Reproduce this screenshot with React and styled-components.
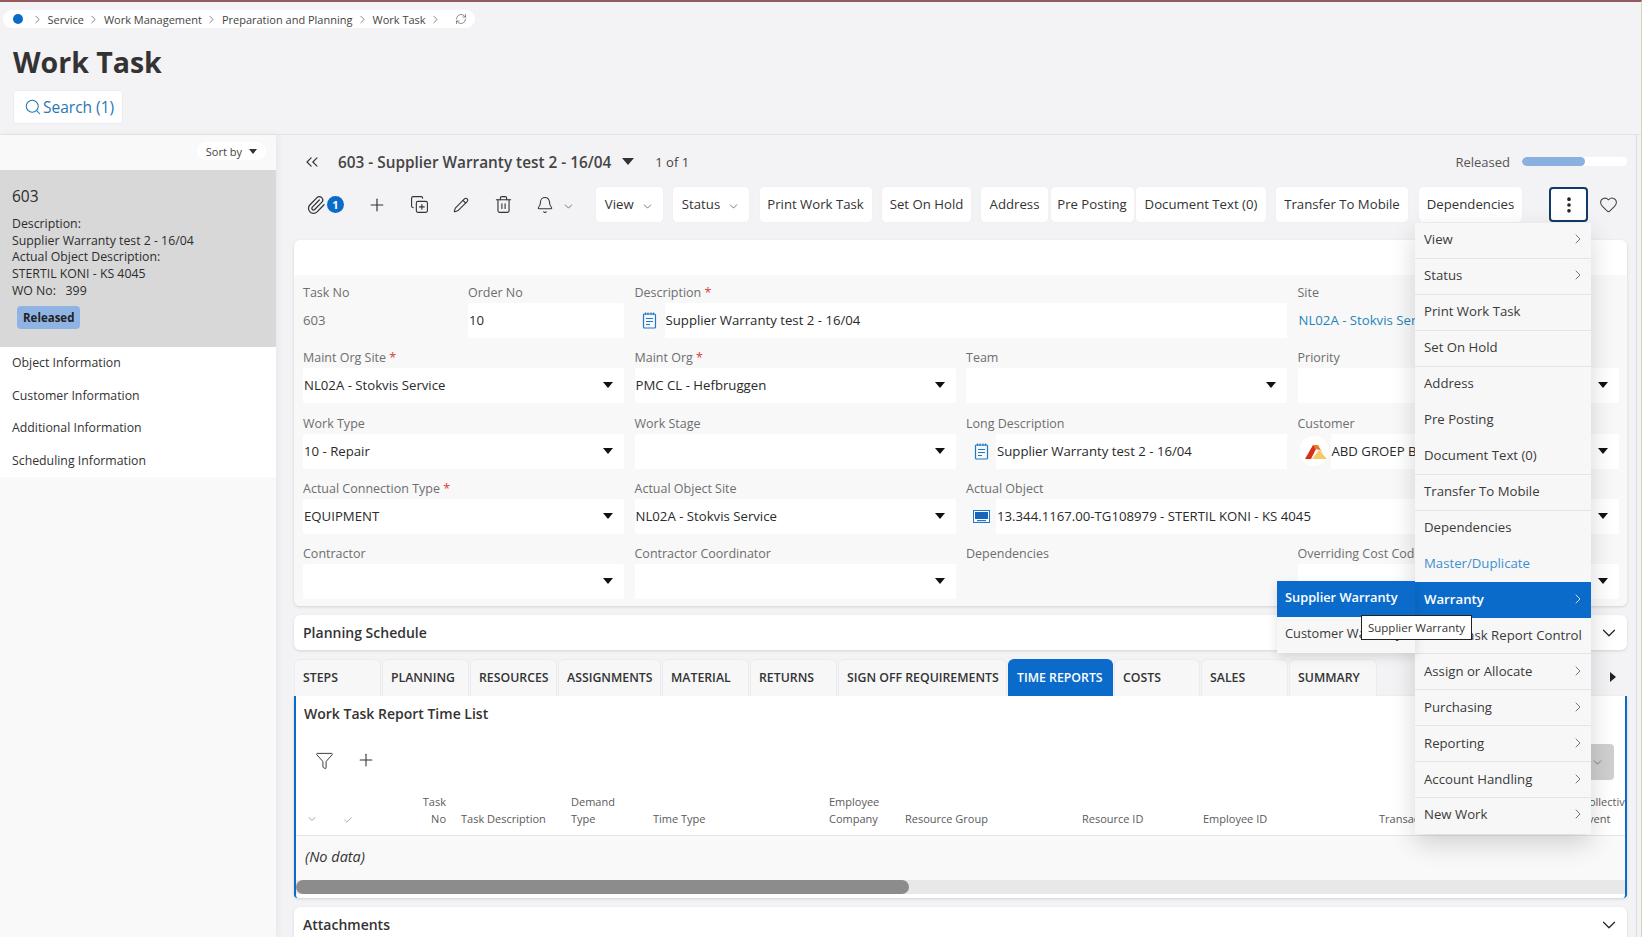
import React from 'react';
import styled, { createGlobalStyle } from 'styled-components';
import {
  Bell, Check, ChevronDown, ChevronRight, ChevronsLeft, CopyPlus, EllipsisVertical, Funnel, Heart,
  Paperclip, Pencil, Plus, RefreshCw, Search, Trash2,
} from 'lucide-react';

const GlobalStyle = createGlobalStyle`
  html, body { margin: 0; padding: 0; height: 100%; overflow: hidden; }
  body { font-family: "Open Sans", "Liberation Sans", sans-serif; color: #333; background: #f3f2f5; }
  * { box-sizing: border-box; }
`;

const Page = styled.div`
  position: relative;
  width: 1642px;
  height: 937px;
  overflow: hidden;
  background: #f3f2f5;
  border-top: 2px solid #955a5f;
  border-right: 1px solid #d9d2bd;
`;

const PageHeader = styled.header`
  height: 133px;
  padding: 8px 0 0 3px;
  border-bottom: 1px solid #e4e4e6;
`;

const Breadcrumb = styled.nav`
  display: flex;
  align-items: center;
  width: 472px;
  height: 18px;
  padding-left: 10px;
  background: #fff;
  border-radius: 9px;
  font-size: 11px;
  color: #444;

  svg { color: #444; flex: none; }
`;

const Dot = styled.span`
  width: 10px;
  height: 10px;
  flex: none;
  border-radius: 50%;
  background: #0b6bcb;
  margin-right: 8px;
`;

const Crumb = styled.span`
  margin: 0 3.5px;
  white-space: nowrap;
`;

const RefreshIcon = styled(RefreshCw)`
  margin-left: 12.5px;
`;

const PageTitle = styled.h1`
  margin: 14px 0 0 10px;
  font-size: 28.5px;
  line-height: 40px;
  font-weight: 700;
  color: #333;
`;

const SearchButton = styled.div`
  display: flex;
  align-items: center;
  gap: 1px;
  width: 110px;
  height: 34px;
  margin: 8px 0 0 10px;
  padding-left: 10px;
  background: #fff;
  border: 1px solid #ececee;
  border-radius: 4px;
  color: #1f78b8;
  font-size: 15.5px;
`;

const Body = styled.div`
  display: flex;
  height: 802px;
`;

const Sidebar = styled.aside`
  width: 276px;
  flex: none;
  background: #f9f9f9;
  box-shadow: 2px 0 8px rgba(0, 0, 0, 0.05);
`;

const SortRow = styled.div`
  display: flex;
  justify-content: flex-end;
  height: 35px;
  padding: 7px 10px 0 0;
`;

const SortBy = styled.div`
  display: flex;
  align-items: center;
  gap: 7px;
  height: 18px;
  padding: 0 9px;
  background: #fff;
  border-radius: 9px;
  font-size: 11px;
  color: #444;
`;

const Caret = styled.span`
  display: inline-block;
  flex: none;
  width: 0;
  height: 0;
  border-left: ${(p) => p.$size || 5}px solid transparent;
  border-right: ${(p) => p.$size || 5}px solid transparent;
  border-top: ${(p) => (p.$size || 5) + 1}px solid ${(p) => p.$color || '#111'};
`;

const SelectedCard = styled.div`
  height: 177px;
  padding: 15px 12px 0;
  background: #d8d8d8;
  color: #2c2c2c;
  font-size: 12.3px;
  line-height: 16.7px;
`;

const CardNumber = styled.div`
  font-size: 15.5px;
  line-height: 22px;
  margin-bottom: 9px;
`;

const StatusBadge = styled.span`
  display: inline-block;
  margin: 6px 0 0 5px;
  padding: 0 6px;
  height: 23px;
  line-height: 23px;
  background: #8fb4e3;
  border-radius: 4px;
  font-size: 11.5px;
  font-weight: 700;
  color: #222;
`;

const SideNav = styled.ul`
  list-style: none;
  margin: 0;
  padding: 0 12px;
  background: #fff;
  font-size: 12.3px;
  color: #333;
`;

const SideNavItem = styled.li`
  height: 32.5px;
  line-height: 32.5px;
`;

const Main = styled.main`
  flex: 1;
  min-width: 0;
  padding: 15px 0 0 18px;
  border-right: 1px solid #dddde0;
  margin-right: 4px;
`;

const RecordRow = styled.div`
  display: flex;
  align-items: center;
  height: 23px;
  padding-right: 9px;
`;

const BackIcon = styled(ChevronsLeft)`
  margin: 0 16px 0 8px;
  color: #333;
`;

const RecordTitle = styled.div`
  font-size: 15.35px;
  font-weight: 600;
  color: #444;
  margin-right: 11px;
  white-space: nowrap;
`;

const RecordCount = styled.div`
  margin-left: 21px;
  font-size: 13px;
  color: #444;
`;

const StateLabel = styled.div`
  margin-left: auto;
  font-size: 13px;
  color: #555;
`;

const Progress = styled.div`
  width: 105px;
  height: 9px;
  margin-left: 12px;
  background: #fff;
  border-radius: 5px;
  overflow: hidden;
`;

const ProgressFill = styled.div`
  width: 60%;
  height: 100%;
  background: #8ab0e0;
  border-radius: 5px;
`;

const Toolbar = styled.div`
  display: flex;
  align-items: center;
  height: 35px;
  margin-top: 14px;
`;

const ToolIcon = styled.span`
  display: flex;
  align-items: center;
  justify-content: center;
  width: ${(p) => p.$w || 42}px;
  flex: none;
  color: #333;
`;

const ClipIcon = styled(ToolIcon)`
  justify-content: flex-start;
  padding-left: 12px;
`;

const BellSlot = styled(ToolIcon)`
  justify-content: flex-start;
  padding-left: 12px;
`;

const CountBubble = styled.span`
  display: inline-flex;
  align-items: center;
  justify-content: center;
  width: 17px;
  height: 17px;
  margin-left: 1px;
  border-radius: 50%;
  background: #0b6bcb;
  color: #fff;
  font-size: 11px;
  font-weight: 700;
`;

const BellChevron = styled(ChevronDown)`
  margin: 4px 0 0 7.5px;
  color: #444;
`;

const ButtonRow = styled.div`
  display: flex;
  gap: ${(p) => p.$gap}px;
  margin-right: ${(p) => p.$after || 0}px;
`;

const ToolButton = styled.div`
  display: flex;
  align-items: center;
  justify-content: center;
  gap: 7px;
  width: ${(p) => p.$w}px;
  height: 35px;
  padding-bottom: 2px;
  background: #fff;
  border-radius: 4px;
  box-shadow: 0 0 1px rgba(0, 0, 0, 0.1);
  font-size: 13.2px;
  color: #333;
  white-space: nowrap;
`;

const ButtonChevron = styled(ChevronDown)`
  margin-top: 5px;
  color: #444;
`;

const KebabButton = styled.div`
  display: flex;
  align-items: center;
  justify-content: center;
  width: 39px;
  height: 35px;
  margin-left: 27px;
  background: #fff;
  border: 2px solid #123a66;
  border-radius: 4px;
  color: #222;
`;

const HeartIcon = styled(Heart)`
  margin-left: 11px;
  color: #444;
`;

const FormCard = styled.section`
  margin: 18px 9px 0 0;
  height: 366px;
  background: #fff;
  border-radius: 6px;
  box-shadow: 0 1px 3px rgba(0, 0, 0, 0.14);
  overflow: hidden;
`;

const FormBlank = styled.div`
  height: 35px;
`;

const FormGrid = styled.div`
  display: grid;
  grid-template-columns: repeat(4, 321px);
  column-gap: 10.5px;
  row-gap: 10.3px;
  align-content: start;
  height: 331px;
  padding: 8px 0 0 9px;
  background: #f8f8f8;
`;

const Field = styled.div`
  grid-column: span ${(p) => p.$span || 1};
  min-width: 0;
`;

const SplitField = styled.div`
  display: grid;
  grid-template-columns: 165px 1fr;
`;

const Label = styled.div`
  height: 20px;
  line-height: 19px;
  font-size: 12.5px;
  color: #6e6e6e;
  white-space: nowrap;
`;

const Required = styled.span`
  color: #d9423a;
`;

const Value = styled.div`
  display: flex;
  align-items: center;
  height: 35px;
  padding-bottom: 1px;
  font-size: 13.2px;
  color: #6e6e6e;
  white-space: nowrap;
`;

const SiteLink = styled(Value)`
  color: #1f85b8;
  padding-left: 1px;
`;

const Input = styled(Value)`
  background: #fff;
  color: #2a2a2a;
  padding: 0 11px 1px 1px;
  border-radius: 2px;
  justify-content: space-between;
`;

const IconInput = styled(Value)`
  color: #2a2a2a;
  padding-bottom: 0;
`;

const IconSlot = styled.span`
  display: flex;
  align-items: center;
  justify-content: center;
  width: ${(p) => p.$w || 30}px;
  height: 35px;
  flex: none;
`;

const IconValue = styled.div`
  flex: 1;
  display: flex;
  align-items: center;
  justify-content: space-between;
  height: 35px;
  padding: 0 11px 1px 1px;
  background: #fff;
  overflow: hidden;
`;

const CollapseCard = styled.section`
  display: flex;
  align-items: center;
  justify-content: space-between;
  height: 35px;
  margin: ${(p) => p.$top}px 9px 0 0;
  padding: 0 7px 0 9px;
  background: #fff;
  border-radius: 6px;
  box-shadow: 0 1px 3px rgba(0, 0, 0, 0.12);
  font-size: 14px;
  font-weight: 600;
  color: #333;

  svg { color: #222; }
`;

const TabBar = styled.div`
  display: flex;
  gap: 1px;
  align-items: stretch;
  height: 37px;
  margin: 9px 9px 0 0;
`;

const Tab = styled.div`
  width: ${(p) => p.$w}px;
  padding-left: 8px;
  line-height: 35px;
  background: ${(p) => (p.$active ? '#0b6bcb' : '#f7f7f8')};
  color: ${(p) => (p.$active ? '#fff' : '#333')};
  border-radius: 6px 6px 0 0;
  border: 1px solid ${(p) => (p.$active ? '#0b6bcb' : '#ececee')};
  border-bottom: 0;
  font-size: 12.3px;
  font-weight: 600;
  white-space: nowrap;
`;

const TabArrow = styled.span`
  margin: 13px 0 0 232px;
  width: 0;
  height: 0;
  border-top: 5px solid transparent;
  border-bottom: 5px solid transparent;
  border-left: 6px solid #222;
`;

const Panel = styled.section`
  height: 202px;
  margin-right: 9px;
  background: #fff;
  border-left: 2px solid #0b6bcb;
  border-right: 2px solid #0b6bcb;
  border-radius: 0 0 4px 4px;
  box-shadow: 0 1px 3px rgba(0, 0, 0, 0.14);
  overflow: hidden;
`;

const PanelTitle = styled.div`
  padding: 8px 0 0 8px;
  height: 36px;
  font-size: 14px;
  font-weight: 600;
  color: #333;
`;

const ListTools = styled.div`
  display: flex;
  align-items: center;
  height: 56px;
  padding-left: 19px;
  gap: 22px;
  color: #333;
  position: relative;
`;

const GreyDropdown = styled.div`
  position: absolute;
  top: 12px;
  right: 11px;
  display: flex;
  align-items: center;
  justify-content: flex-end;
  width: 40px;
  height: 36px;
  padding-right: 10px;
  background: #cfcfcf;
  border-radius: 4px;
  color: #555;
`;

const HeadRow = styled.div`
  display: grid;
  grid-template-columns: 32px 40px 78px 125px 82px 176px 76px 177px 121px 176px 203px 100px;
  align-items: end;
  height: 48px;
  padding-bottom: 8px;
  border-bottom: 1px solid #e6e6e6;
  font-size: 11px;
  line-height: 17px;
  color: #5a5a5a;
  white-space: pre-line;
`;

const HeadIcon = styled.span`
  display: flex;
  justify-content: center;
  padding-bottom: 2px;
  color: #666;
`;

const HeadCell = styled.div`
  text-align: ${(p) => (p.$right ? 'right' : 'left')};
  padding-left: ${(p) => p.$pad || 0}px;
`;

const EmptyRow = styled.div`
  height: 44px;
  line-height: 42px;
  padding-left: 9px;
  background: #f9f9f9;
  font-size: 14.5px;
  font-style: italic;
  color: #333;
`;

const ScrollTrack = styled.div`
  height: 14px;
  background: #e8e8e8;
`;

const ScrollThumb = styled.div`
  width: 613px;
  height: 100%;
  background: #8c8c8c;
  border-radius: 7px;
`;

const Menu = styled.ul`
  position: absolute;
  left: 1415px;
  top: 221px;
  width: 176px;
  margin: 0;
  padding: 0;
  list-style: none;
  background: #f7f7f7;
  box-shadow: 0 10px 24px rgba(0, 0, 0, 0.16);
`;

const MenuItem = styled.li`
  display: flex;
  align-items: center;
  justify-content: space-between;
  height: 35.94px;
  padding: 0 5px 2px 9px;
  font-size: 13.2px;
  white-space: nowrap;
  border-bottom: 1px solid ${(p) => (p.$line ? '#e4e4e4' : 'transparent')};
  background: ${(p) => (p.$active ? '#0b6bcb' : 'transparent')};
  color: ${(p) => (p.$active ? '#fff' : p.$link ? '#3f8fd0' : '#3a3a3a')};
  font-weight: ${(p) => (p.$active ? 600 : 400)};

  svg { color: ${(p) => (p.$active ? '#fff' : '#555')}; }
`;

const SubMenu = styled.ul`
  position: absolute;
  left: 1277px;
  top: 579px;
  width: 138px;
  margin: 0;
  padding: 0;
  list-style: none;
  background: #f7f7f7;
  box-shadow: 0 4px 10px rgba(0, 0, 0, 0.12);
`;

const SubItem = styled(MenuItem)`
  padding: 0 8px 3px;
  font-size: 12.8px;
  overflow: hidden;
  border-bottom: 0;
`;

const Tooltip = styled.div`
  position: absolute;
  left: 1361px;
  top: 613px;
  width: 111px;
  height: 25px;
  line-height: 23px;
  text-align: center;
  background: #fff;
  border: 1px solid #222;
  font-size: 11.5px;
  color: #333;
  white-space: nowrap;
`;

const DocIcon = () => (
  <svg width="15" height="17" viewBox="0 0 15 17" fill="none" stroke="#1f78c8" strokeWidth="1.2">
    <rect x="1.5" y="2" width="12" height="14" rx="1" />
    <path d="M3.5 0.5v2.5M6 0.5v2.5M9 0.5v2.5M11.5 0.5v2.5M4 6.5h7M4 9.5h7M4 12.5h4" />
  </svg>
);

const MonitorIcon = () => (
  <svg width="17" height="13" viewBox="0 0 17 13">
    <rect x="0.5" y="0.5" width="16" height="12" fill="#fff" stroke="#1f78c8" />
    <rect x="2" y="2" width="13" height="7" fill="#1565b8" />
    <rect x="4" y="10" width="9" height="1.2" fill="#1f78c8" />
  </svg>
);

const CustomerLogo = () => (
  <svg width="30" height="30" viewBox="0 0 30 30">
    <circle cx="15" cy="15" r="15" fill="#fff" />
    <path d="M6 23 L14 9 L19 9 L12 23 Z" fill="#d9301c" />
    <path d="M14 9 L19 9 L24 18 L21 14 L16 13 Z" fill="#ee7a1e" />
    <path d="M13 23 L20 14 L28 23 Z" fill="#f5c96a" />
  </svg>
);

const form = [
  { label: 'Maint Org Site', req: true, value: 'NL02A - Stokvis Service' },
  { label: 'Maint Org', req: true, value: 'PMC CL - Hefbruggen' },
  { label: 'Team', value: '' },
  { label: 'Priority', value: '' },
  { label: 'Work Type', value: '10 - Repair' },
  { label: 'Work Stage', value: '' },
];

const tabs = [
  ['STEPS', 87], ['PLANNING', 87], ['RESOURCES', 87], ['ASSIGNMENTS', 103], ['MATERIAL', 87], ['RETURNS', 87],
  ['SIGN OFF REQUIREMENTS', 169], ['TIME REPORTS', 105], ['COSTS', 86], ['SALES', 87], ['SUMMARY', 88],
];

const menu = [
  { text: 'View', arrow: true, line: true },
  { text: 'Status', arrow: true, line: true },
  { text: 'Print Work Task', line: true },
  { text: 'Set On Hold', line: true },
  { text: 'Address' },
  { text: 'Pre Posting' },
  { text: 'Document Text (0)', line: true },
  { text: 'Transfer To Mobile', line: true },
  { text: 'Dependencies' },
  { text: 'Master/Duplicate', link: true },
  { text: 'Warranty', arrow: true, active: true },
  { text: 'Work Task Report Control', line: true },
  { text: 'Assign or Allocate', arrow: true, line: true },
  { text: 'Purchasing', arrow: true, line: true },
  { text: 'Reporting', arrow: true, line: true },
  { text: 'Account Handling', arrow: true, line: true },
  { text: 'New Work', arrow: true },
];

const heads = [
  { text: 'Task\nNo', right: true },
  { text: 'Task Description', pad: 15 },
  { text: 'Demand\nType' },
  { text: 'Time Type' },
  { text: 'Employee\nCompany' },
  { text: 'Resource Group' },
  { text: 'Resource ID' },
  { text: 'Employee ID' },
  { text: 'Transaction' },
  { text: 'Collective\nEvent' },
];

const Select = ({ value }) => (
  <Input>
    <span>{value}</span>
    <Caret />
  </Input>
);

const App = () => (
  <Page>
    <GlobalStyle />
    <PageHeader>
      <Breadcrumb>
        <Dot />
        <ChevronRight size={13} strokeWidth={1.2} />
        <Crumb>Service</Crumb>
        <ChevronRight size={13} strokeWidth={1.2} />
        <Crumb>Work Management</Crumb>
        <ChevronRight size={13} strokeWidth={1.2} />
        <Crumb>Preparation and Planning</Crumb>
        <ChevronRight size={13} strokeWidth={1.2} />
        <Crumb>Work Task</Crumb>
        <ChevronRight size={13} strokeWidth={1.2} />
        <RefreshIcon size={12} strokeWidth={1.2} />
      </Breadcrumb>
      <PageTitle>Work Task</PageTitle>
      <SearchButton>
        <Search size={18} strokeWidth={1.4} />
        Search (1)
      </SearchButton>
    </PageHeader>
    <Body>
      <Sidebar>
        <SortRow>
          <SortBy>
            Sort by
            <Caret $size={4} $color="#333" />
          </SortBy>
        </SortRow>
        <SelectedCard>
          <CardNumber>603</CardNumber>
          <div>Description:</div>
          <div>Supplier Warranty test 2 - 16/04</div>
          <div>Actual Object Description:</div>
          <div>STERTIL KONI - KS 4045</div>
          <div>WO No:&nbsp;&nbsp; 399</div>
          <StatusBadge>Released</StatusBadge>
        </SelectedCard>
        <SideNav>
          <SideNavItem>Object Information</SideNavItem>
          <SideNavItem>Customer Information</SideNavItem>
          <SideNavItem>Additional Information</SideNavItem>
          <SideNavItem>Scheduling Information</SideNavItem>
        </SideNav>
      </Sidebar>
      <Main>
        <RecordRow>
          <BackIcon size={20} strokeWidth={1.4} />
          <RecordTitle>603 - Supplier Warranty test 2 - 16/04</RecordTitle>
          <Caret $size={6.5} $color="#333" />
          <RecordCount>1 of 1</RecordCount>
          <StateLabel>Released</StateLabel>
          <Progress>
            <ProgressFill />
          </Progress>
        </RecordRow>
        <Toolbar>
          <ClipIcon $w={62}>
            <Paperclip size={20} strokeWidth={1.5} />
            <CountBubble>1</CountBubble>
          </ClipIcon>
          <ToolIcon><Plus size={20} strokeWidth={1.4} /></ToolIcon>
          <ToolIcon><CopyPlus size={19} strokeWidth={1.4} /></ToolIcon>
          <ToolIcon><Pencil size={16} strokeWidth={1.6} /></ToolIcon>
          <ToolIcon><Trash2 size={19} strokeWidth={1.4} /></ToolIcon>
          <BellSlot $w={72}>
            <Bell size={18} strokeWidth={1.4} />
            <BellChevron size={13} strokeWidth={1.3} />
          </BellSlot>
          <ButtonRow $gap={10.5} $after={10}>
            <ToolButton $w={66.5}>View <ButtonChevron size={13} strokeWidth={1.3} /></ToolButton>
            <ToolButton $w={76}>Status <ButtonChevron size={13} strokeWidth={1.3} /></ToolButton>
            <ToolButton $w={112}>Print Work Task</ToolButton>
            <ToolButton $w={89}>Set On Hold</ToolButton>
          </ButtonRow>
          <ButtonRow $gap={2.5} $after={10}>
            <ToolButton $w={67}>Address</ToolButton>
            <ToolButton $w={83}>Pre Posting</ToolButton>
            <ToolButton $w={130}>Document Text (0)</ToolButton>
          </ButtonRow>
          <ButtonRow $gap={11}>
            <ToolButton $w={132}>Transfer To Mobile</ToolButton>
            <ToolButton $w={103}>Dependencies</ToolButton>
          </ButtonRow>
          <KebabButton><EllipsisVertical size={20} strokeWidth={2.4} /></KebabButton>
          <HeartIcon size={19} strokeWidth={1.3} />
        </Toolbar>
        <FormCard>
          <FormBlank />
          <FormGrid>
            <SplitField>
              <div>
                <Label>Task No</Label>
                <Value>603</Value>
              </div>
              <div>
                <Label>Order No</Label>
                <Input>10</Input>
              </div>
            </SplitField>
            <Field $span={2}>
              <Label>Description <Required>*</Required></Label>
              <IconInput>
                <IconSlot><DocIcon /></IconSlot>
                <IconValue>Supplier Warranty test 2 - 16/04</IconValue>
              </IconInput>
            </Field>
            <Field>
              <Label>Site</Label>
              <SiteLink>NL02A - Stokvis Service</SiteLink>
            </Field>
            {form.map((f) => (
              <Field key={f.label}>
                <Label>{f.label} {f.req && <Required>*</Required>}</Label>
                <Select value={f.value} />
              </Field>
            ))}
            <Field>
              <Label>Long Description</Label>
              <IconInput>
                <IconSlot><DocIcon /></IconSlot>
                <IconValue>Supplier Warranty test 2 - 16/04</IconValue>
              </IconInput>
            </Field>
            <Field>
              <Label>Customer</Label>
              <IconInput>
                <IconSlot $w={33}><CustomerLogo /></IconSlot>
                <IconValue>ABD GROEP BV<Caret /></IconValue>
              </IconInput>
            </Field>
            <Field>
              <Label>Actual Connection Type <Required>*</Required></Label>
              <Select value="EQUIPMENT" />
            </Field>
            <Field>
              <Label>Actual Object Site</Label>
              <Select value="NL02A - Stokvis Service" />
            </Field>
            <Field $span={2}>
              <Label>Actual Object</Label>
              <IconInput>
                <IconSlot><MonitorIcon /></IconSlot>
                <IconValue>13.344.1167.00-TG108979 - STERTIL KONI - KS 4045<Caret /></IconValue>
              </IconInput>
            </Field>
            <Field>
              <Label>Contractor</Label>
              <Select value="" />
            </Field>
            <Field>
              <Label>Contractor Coordinator</Label>
              <Select value="" />
            </Field>
            <Field>
              <Label>Dependencies</Label>
            </Field>
            <Field>
              <Label>Overriding Cost Code</Label>
              <Select value="" />
            </Field>
          </FormGrid>
        </FormCard>
        <CollapseCard $top={9}>
          Planning Schedule
          <ChevronDown size={22} strokeWidth={1.3} />
        </CollapseCard>
        <TabBar>
          {tabs.map(([name, w]) => (
            <Tab key={name} $w={w} $active={name === 'TIME REPORTS'}>{name}</Tab>
          ))}
          <TabArrow />
        </TabBar>
        <Panel>
          <PanelTitle>Work Task Report Time List</PanelTitle>
          <ListTools>
            <Funnel size={19} strokeWidth={1.2} />
            <Plus size={20} strokeWidth={1.3} />
            <GreyDropdown><ChevronDown size={13} strokeWidth={1.2} /></GreyDropdown>
          </ListTools>
          <HeadRow>
            <HeadIcon><ChevronDown size={12} strokeWidth={1.2} /></HeadIcon>
            <HeadIcon><Check size={10} strokeWidth={1.2} /></HeadIcon>
            {heads.map((h) => (
              <HeadCell key={h.text} $right={h.right} $pad={h.pad}>{h.text}</HeadCell>
            ))}
          </HeadRow>
          <EmptyRow>(No data)</EmptyRow>
          <ScrollTrack>
            <ScrollThumb />
          </ScrollTrack>
        </Panel>
        <CollapseCard $top={9}>
          Attachments
          <ChevronDown size={22} strokeWidth={1.3} />
        </CollapseCard>
      </Main>
    </Body>
    <Menu>
      {menu.map((m) => (
        <MenuItem key={m.text} $line={m.line} $active={m.active} $link={m.link}>
          {m.text}
          {m.arrow && <ChevronRight size={16} strokeWidth={1.2} />}
        </MenuItem>
      ))}
    </Menu>
    <SubMenu>
      <SubItem $active>Supplier Warranty</SubItem>
      <SubItem>Customer Warranty</SubItem>
    </SubMenu>
    <Tooltip>Supplier Warranty</Tooltip>
  </Page>
);

export default App;
